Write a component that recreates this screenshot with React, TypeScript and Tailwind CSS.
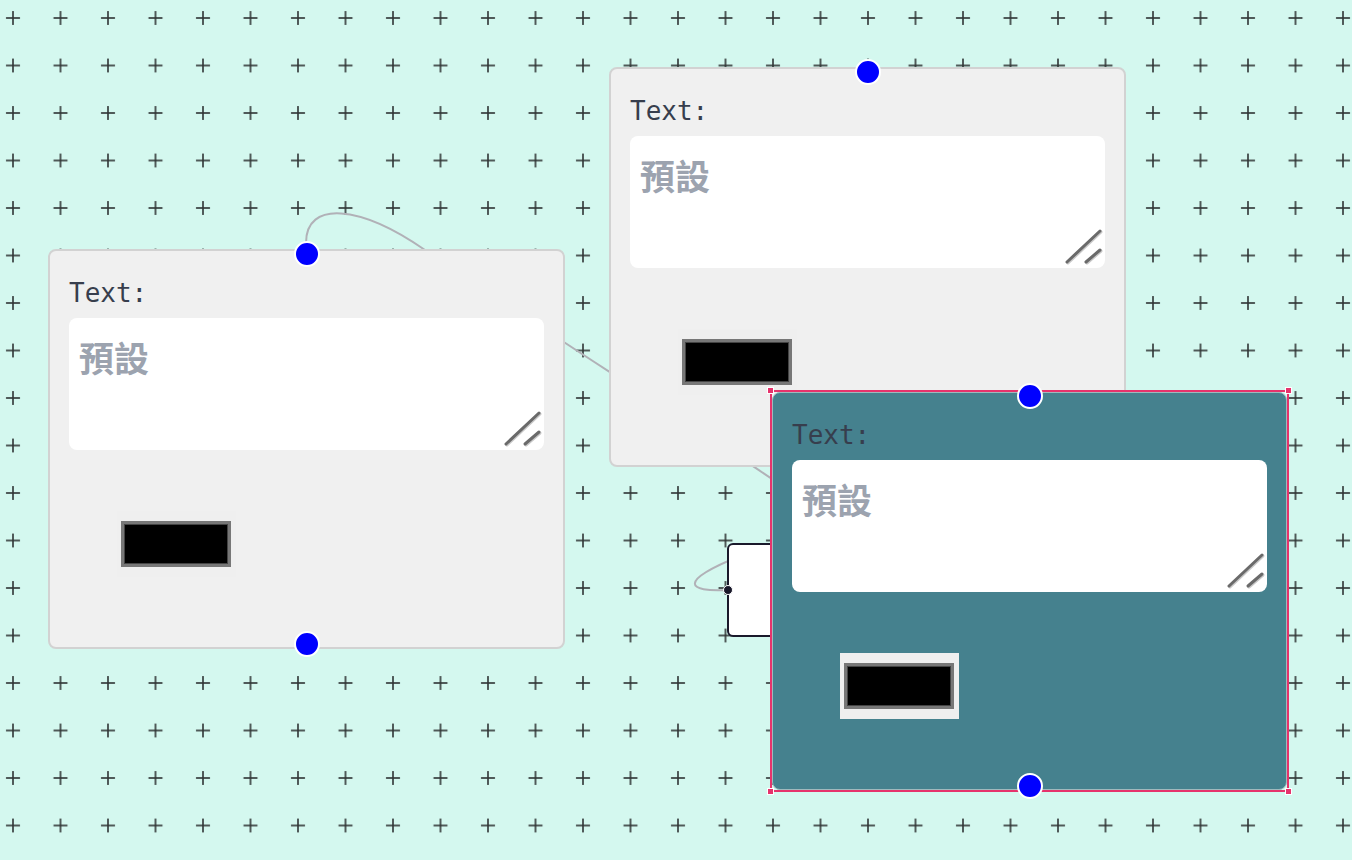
import React from "react"

type NodeProps = {
  x: number
  y: number
}

function Grip() {
  return (
    <svg className="absolute right-0 bottom-0" width="40" height="40" viewBox="0 0 40 40">
      <g stroke="#c8c8c8" strokeWidth="3" strokeLinecap="round">
        <line x1="3" y1="35" x2="36" y2="4" />
        <line x1="22" y1="35" x2="36" y2="23" />
      </g>
      <g stroke="#6a6a6a" strokeWidth="3" strokeLinecap="round">
        <line x1="2" y1="34" x2="35" y2="3" />
        <line x1="21" y1="34" x2="35" y2="22" />
      </g>
    </svg>
  )
}

function Handle({ pos }: { pos: "top" | "bottom" }) {
  return (
    <div
      className={
        pos === "top"
          ? "absolute left-1/2 top-[-10px] h-[26px] w-[26px] -translate-x-1/2 rounded-full border-2 border-white bg-[#0000ff]"
          : "absolute left-1/2 bottom-[-10px] h-[26px] w-[26px] -translate-x-1/2 rounded-full border-2 border-white bg-[#0000ff]"
      }
    />
  )
}

function TextNodeBody({ teal }: { teal?: boolean }) {
  return (
    <div
      className={
        teal
          ? "relative box-border h-full w-full rounded-lg border border-[#9fb9bd] bg-[#45818e] px-[19px] pt-[29px]"
          : "relative box-border h-full w-full rounded-lg border-2 border-[#d2d2d2] bg-[#f0f0f0] px-[19px] pt-[29px]"
      }
    >
      <div className="h-[26px] font-['DejaVu_Sans_Mono',monospace] text-[26px] leading-none text-[#373e4d]">
        Text:
      </div>
      <div className="relative mt-[12px] h-[132px] rounded-lg bg-white pl-[10px] pt-[21px]">
        <div className="font-['Noto_Sans_CJK_TC',sans-serif] text-[35px] font-bold leading-none text-[#9ca3af]">
          預設
        </div>
        <Grip />
      </div>
      <div className="ml-[48px] mt-[61px] w-[119px] bg-[#efefef] px-1 py-2.5">
        <div className="box-border h-[46px] w-[110px] border-[3px] border-[#777777] bg-black shadow-[inset_0_0_0_1px_#444]" />
      </div>
      <Handle pos="top" />
      <Handle pos="bottom" />
    </div>
  )
}

function TextNode({ x, y }: NodeProps) {
  return (
    <div className="absolute h-[400px] w-[517px]" style={{ left: x, top: y }}>
      <TextNodeBody />
    </div>
  )
}

function Corner({ cls }: { cls: string }) {
  return <div className={"absolute h-[7px] w-[7px] border border-white bg-[#e6336c] " + cls} />
}

function SelectedNode({ x, y }: NodeProps) {
  return (
    <div
      className="absolute box-border h-[402px] w-[519px] border-2 border-[#e6336c]"
      style={{ left: x, top: y }}
    >
      <TextNodeBody teal />
      <Corner cls="left-[-5px] top-[-5px]" />
      <Corner cls="right-[-5px] top-[-5px]" />
      <Corner cls="left-[-5px] bottom-[-5px]" />
      <Corner cls="right-[-5px] bottom-[-5px]" />
    </div>
  )
}

export default function App() {
  return (
    <div className="relative h-[860px] w-[1352px] overflow-hidden bg-[#d4f8ef]">
      <svg className="absolute inset-0" width="1352" height="860">
        <defs>
          <pattern id="cross" x="-10.75" y="-5.75" width="47.5" height="47.5" patternUnits="userSpaceOnUse">
            <g stroke="#2f3434" strokeWidth="1.6">
              <line x1="16.75" y1="23.75" x2="30.75" y2="23.75" />
              <line x1="23.75" y1="16.75" x2="23.75" y2="30.75" />
            </g>
          </pattern>
        </defs>
        <rect width="1352" height="860" fill="url(#cross)" />
        <g fill="none" stroke="#b1b1b7" strokeWidth="2">
          <path d="M306,243 C306,200 360,205 425,250 S700,430 775,481" />
          <path d="M727,590 C688,592 676,582 740,556" />
        </g>
      </svg>

      <TextNode x={48} y={249} />
      <TextNode x={609} y={67} />

      {/* small white node, mostly covered */}
      <div className="absolute left-[727px] top-[543px] h-[94px] w-[120px] rounded-md border-2 border-[#1a192b] bg-white">
        <div className="absolute left-[-6px] top-[40px] h-[10px] w-[10px] rounded-full border border-white bg-[#1a192b]" />
      </div>

      <SelectedNode x={770} y={390} />
    </div>
  )
}
